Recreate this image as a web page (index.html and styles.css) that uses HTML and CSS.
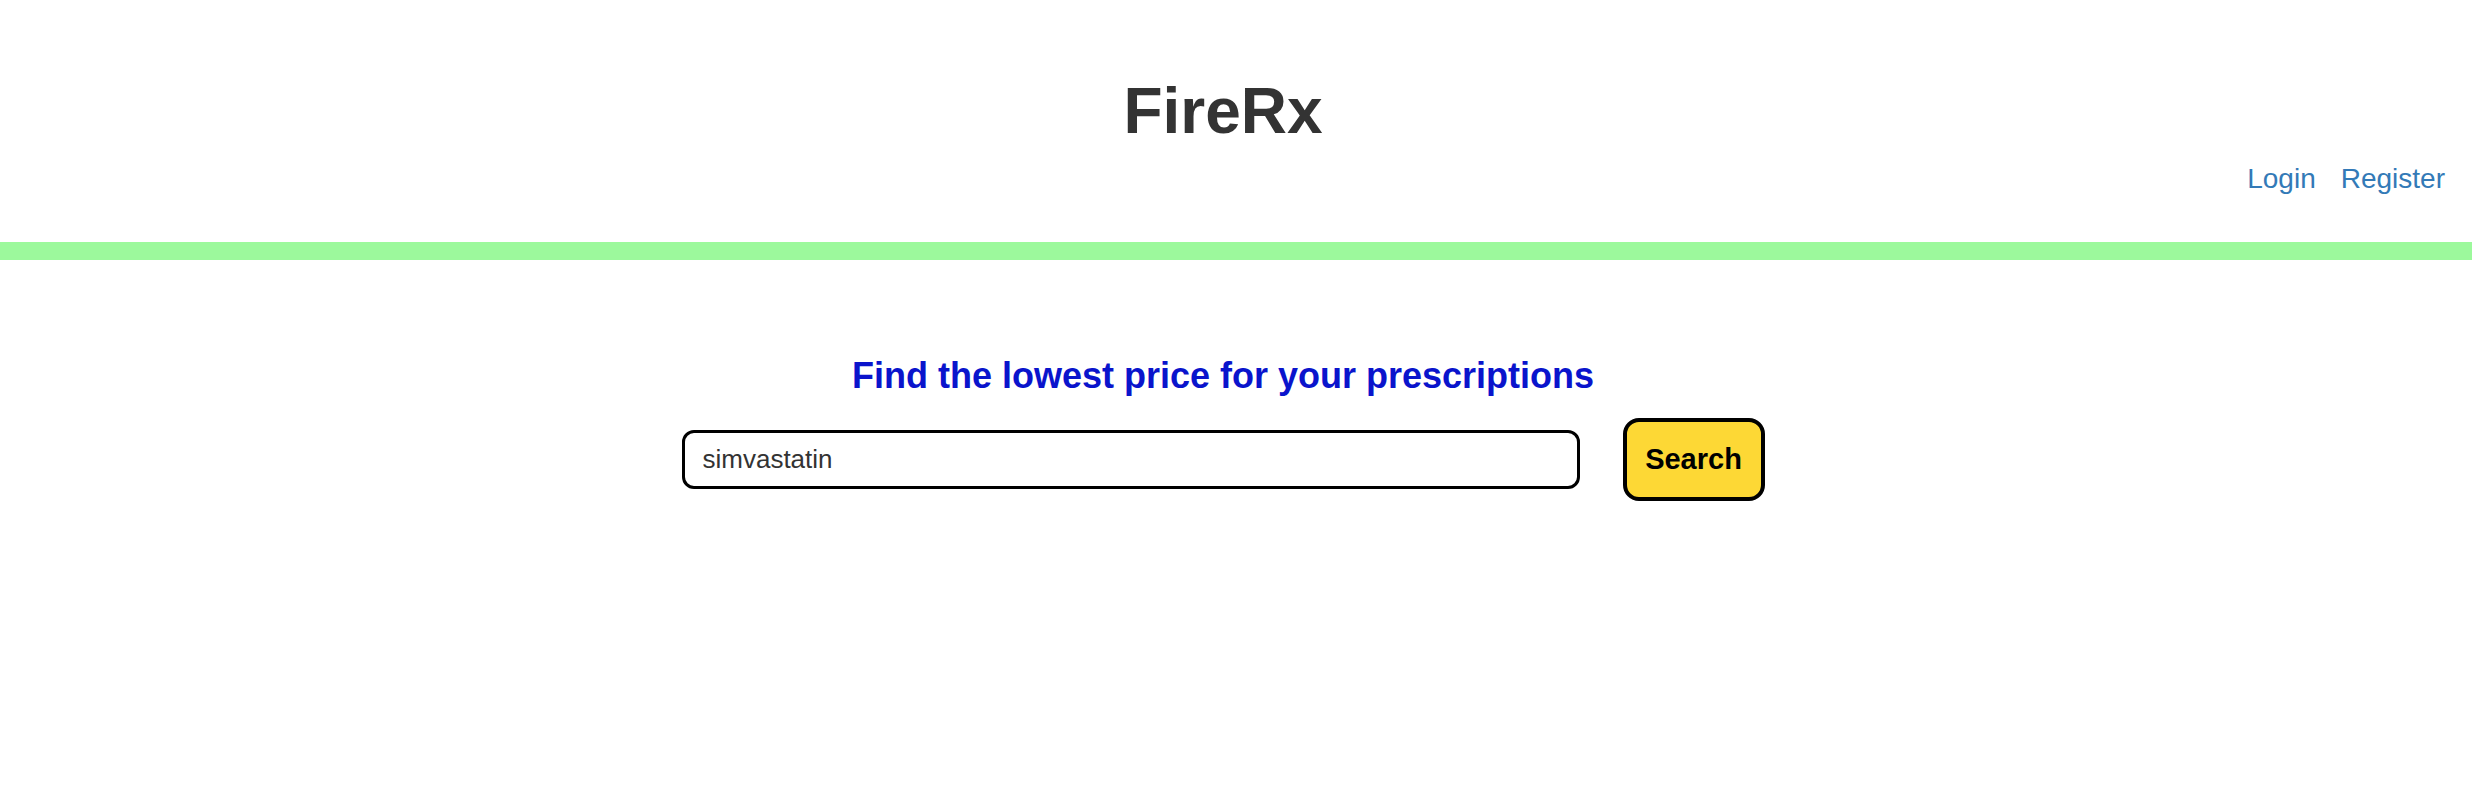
FILE: index.html
```html
<!DOCTYPE html>
<html lang="en">
<head>
<meta charset="utf-8">
<title>FireRx</title>
<link rel="stylesheet" href="styles.css">
</head>
<body>
<header class="site-header">
  <h1 class="brand">FireRx</h1>
  <nav class="nav">
    <a href="#" class="nav-link">Login</a>
    <a href="#" class="nav-link">Register</a>
  </nav>
</header>
<div class="green-bar"></div>
<main class="main">
  <h2 class="tagline">Find the lowest price for your prescriptions</h2>
  <form class="search-form" onsubmit="return false">
    <input class="search-input" type="text" value="simvastatin">
    <button class="search-button" type="submit">Search</button>
  </form>
</main>
</body>
</html>
```

FILE: styles.css
```css
html, body {
  margin: 0;
  padding: 0;
  background: #fff;
}

body {
  font-family: "Liberation Sans", Arial, Helvetica, sans-serif;
  color: #333;
}

.site-header {
  display: flex;
  flex-direction: column;
  padding: 75px 0 43px;
}

.brand {
  margin: 0;
  padding-right: 26px;
  text-align: center;
  font-size: 64px;
  line-height: 72px;
  font-weight: bold;
  color: #333;
}

.nav {
  display: flex;
  justify-content: flex-end;
  gap: 25px;
  margin-top: 12px;
  padding-right: 27px;
}

.nav-link {
  font-size: 28px;
  line-height: 40px;
  color: #337ab7;
  text-decoration: none;
}

.green-bar {
  height: 18px;
  background: #9cf99c;
}

.main {
  padding: 94px 26px 0 0;
  text-align: center;
}

.tagline {
  margin: 0 0 20px;
  font-size: 36px;
  line-height: 44px;
  font-weight: bold;
  color: #0a14cc;
}

.search-form {
  display: flex;
  justify-content: center;
  align-items: center;
  gap: 43px;
}

.search-input {
  box-sizing: border-box;
  width: 898px;
  height: 59px;
  border: 3px solid #000;
  border-radius: 12px;
  padding: 0 18px;
  font-family: inherit;
  font-size: 26px;
  color: #333;
  background: #fff;
  outline: none;
}

.search-button {
  box-sizing: border-box;
  width: 142px;
  height: 83px;
  border: 4px solid #000;
  border-radius: 16px;
  background: #fdd835;
  font-family: inherit;
  font-size: 29px;
  font-weight: bold;
  color: #000;
  padding: 0;
}
```
